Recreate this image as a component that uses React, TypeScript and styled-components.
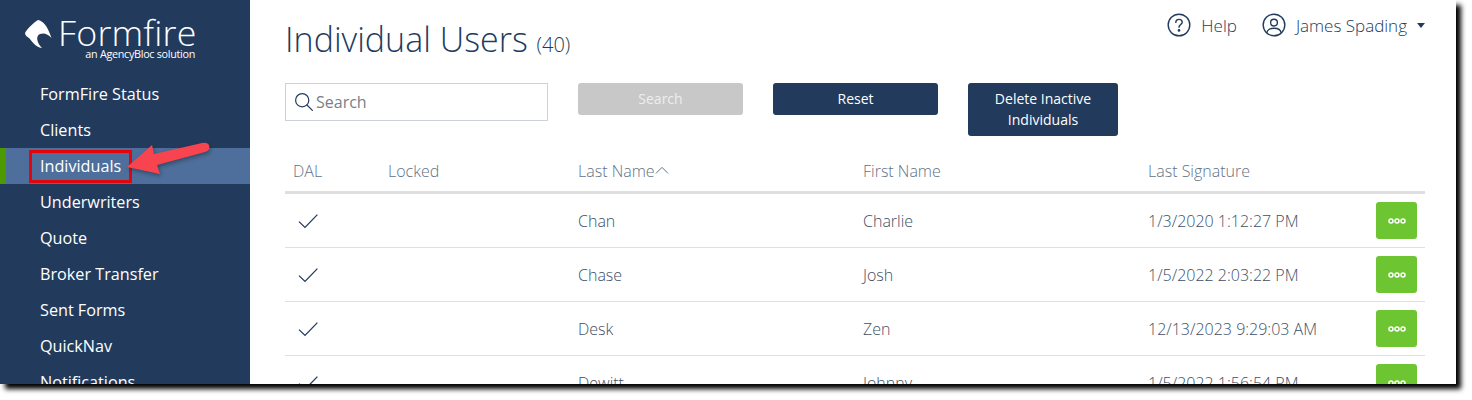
import React from "react";
import styled, { createGlobalStyle } from "styled-components";

const navItems = [
  "FormFire Status",
  "Clients",
  "Individuals",
  "Underwriters",
  "Quote",
  "Broker Transfer",
  "Sent Forms",
  "QuickNav",
  "Notifications",
];

const rows = [
  { last: "Chan", first: "Charlie", signature: "1/3/2020 1:12:27 PM" },
  { last: "Chase", first: "Josh", signature: "1/5/2022 2:03:22 PM" },
  { last: "Desk", first: "Zen", signature: "12/13/2023 9:29:03 AM" },
  { last: "Dewitt", first: "Johnny", signature: "1/5/2022 1:56:54 PM" },
];

const App = () => {
  return (
    <>
      <GlobalStyle />
      <Frame>
        <Sidebar>
          <Logo>
            <LogoTop>
              <svg width="27" height="28" viewBox="0 0 27 28">
                <path
                  d="M0 13 C2 9 8 3 13 0 C18 1 22 5 26.5 18 C23 14 19 12.5 15 14 C11 15.5 11 22 17 28 C10 27 7 21 4 18 C2 17 0 15 0 13 Z"
                  fill="#fff"
                />
              </svg>
              <LogoWord>Formfire</LogoWord>
            </LogoTop>
            <LogoTag>an AgencyBloc solution</LogoTag>
          </Logo>
          <Nav>
            {navItems.map((item) => (
              <NavItem key={item} $active={item === "Individuals"}>
                <NavLabel $boxed={item === "Individuals"}>{item}</NavLabel>
              </NavItem>
            ))}
          </Nav>
          <Arrow width="90" height="40" viewBox="0 0 90 40">
            <path
              d="M3 27 L28 5 L30 14 L78 3 Q85 2 85.5 7 Q85.5 11 81 12 L33 25 L36 34 Z"
              fill="#f8444f"
            />
          </Arrow>
        </Sidebar>
        <Main>
          <TopRow>
            <Title>
              Individual Users <Count>(40)</Count>
            </Title>
            <UserNav>
              <UserLink>
                <svg width="24" height="24" viewBox="0 0 24 24" fill="none" stroke="#223b5d" strokeWidth="1.4">
                  <circle cx="12" cy="12" r="10.8" />
                  <path d="M8.8 9.4 C8.8 7.4 10.3 6.4 12 6.4 C13.8 6.4 15.2 7.5 15.2 9.2 C15.2 11.4 12 11.6 12 14.2" strokeLinecap="round" />
                  <circle cx="12" cy="17.4" r="0.7" fill="#223b5d" />
                </svg>
                <UserText>Help</UserText>
              </UserLink>
              <UserLink>
                <svg width="24" height="24" viewBox="0 0 24 24" fill="none" stroke="#223b5d" strokeWidth="1.4">
                  <circle cx="12" cy="12" r="10.8" />
                  <circle cx="12" cy="9.6" r="3.4" />
                  <path d="M4.8 20 C5.4 16.4 8 15.2 12 15.2 C16 15.2 18.6 16.4 19.2 20" />
                </svg>
                <UserText>James Spading</UserText>
                <Caret />
              </UserLink>
            </UserNav>
          </TopRow>
          <FilterRow>
            <SearchBox>
              <svg width="20" height="20" viewBox="0 0 20 20" fill="none" stroke="#223b5d" strokeWidth="1.2">
                <circle cx="8.2" cy="8.2" r="6.6" />
                <path d="M13 13 L18.4 18.4" strokeLinecap="round" />
              </svg>
              <SearchInput placeholder="Search" />
            </SearchBox>
            <ActionButton $disabled>Search</ActionButton>
            <ActionButton>Reset</ActionButton>
            <DeleteButton>
              Delete Inactive
              <br />
              Individuals
            </DeleteButton>
          </FilterRow>
          <HeaderRow>
            <HeaderCell>DAL</HeaderCell>
            <HeaderCell>Locked</HeaderCell>
            <HeaderCell>
              Last Name
              <svg width="14" height="8" viewBox="0 0 14 8" fill="none" stroke="#5f7286" strokeWidth="1">
                <path d="M1 7.4 L7 1.4 L13 7.4" />
              </svg>
            </HeaderCell>
            <HeaderCell>First Name</HeaderCell>
            <HeaderCell>Last Signature</HeaderCell>
          </HeaderRow>
          {rows.map((row) => (
            <BodyRow key={row.last}>
              <BodyCell>
                <svg width="22" height="16" viewBox="0 0 22 16" fill="none" stroke="#223b5d" strokeWidth="1.3">
                  <path d="M2 8.6 L8 14.4 L20.4 1.6" />
                </svg>
              </BodyCell>
              <BodyCell />
              <BodyCell>{row.last}</BodyCell>
              <BodyCell>{row.first}</BodyCell>
              <BodyCell>{row.signature}</BodyCell>
              <MoreButton>
                <svg width="18" height="6" viewBox="0 0 18 6" fill="none" stroke="#fff" strokeWidth="1.5">
                  <circle cx="3" cy="3" r="2" />
                  <circle cx="9" cy="3" r="2" />
                  <circle cx="15" cy="3" r="2" />
                </svg>
              </MoreButton>
            </BodyRow>
          ))}
        </Main>
      </Frame>
    </>
  );
};

export default App;

const GlobalStyle = createGlobalStyle`
  html, body {
    margin: 0;
    background: #fff;
  }
  body {
    font-family: "Open Sans", "Liberation Sans", sans-serif;
    height: 400px;
    overflow: hidden;
  }
`;

const Frame = styled.div`
  width: 1456px;
  height: 384px;
  display: flex;
  overflow: hidden;
  background: #fff;
  box-shadow: 5px 5px 5px 0 #000;
`;

const Sidebar = styled.aside`
  position: relative;
  width: 250px;
  flex: none;
  background: #223b5d;
  color: #fff;
`;

const Logo = styled.div`
  width: 170px;
  margin-left: 25px;
  padding-top: 16px;
  height: 76px;
  box-sizing: border-box;
  display: flex;
  flex-direction: column;
`;

const LogoTop = styled.div`
  display: flex;
  align-items: center;
  gap: 6px;
  height: 33px;
  svg {
    margin-top: 2px;
    flex: none;
  }
`;

const LogoWord = styled.span`
  font-size: 35.8px;
  font-weight: 300;
  line-height: 33px;
  letter-spacing: 0.2px;
`;

const LogoTag = styled.span`
  align-self: flex-end;
  font-size: 10.8px;
  line-height: 12px;
  margin-top: -1px;
  letter-spacing: -0.3px;
`;

const Nav = styled.nav`
  display: flex;
  flex-direction: column;
`;

const NavItem = styled.div<{ $active?: boolean }>`
  height: 36px;
  box-sizing: border-box;
  padding-left: ${(p) => (p.$active ? "34px" : "40px")};
  display: flex;
  align-items: center;
  font-size: 16.2px;
  background: ${(p) => (p.$active ? "#4e6f9b" : "transparent")};
  border-left: ${(p) => (p.$active ? "6px solid #4c9a00" : "none")};
`;

const NavLabel = styled.span<{ $boxed?: boolean }>`
  position: relative;
  ${(p) =>
    p.$boxed &&
    `
    &::after {
      content: "";
      position: absolute;
      left: -11px;
      right: -11px;
      top: -5px;
      bottom: -6px;
      border: 3px solid #e4050c;
    }
  `}
`;

const Arrow = styled.svg`
  position: absolute;
  left: 124px;
  top: 140px;
  filter: drop-shadow(1px 2px 2px rgba(0, 0, 0, 0.35));
`;

const Main = styled.main`
  flex: 1;
  min-width: 0;
  padding: 0 31px 0 35px;
`;

const TopRow = styled.div`
  display: flex;
  justify-content: space-between;
  height: 83px;
`;

const Title = styled.h1`
  margin: 16px 0 0;
  font-size: 34px;
  font-weight: 300;
  line-height: 46px;
  color: #223b5d;
`;

const Count = styled.span`
  font-size: 20px;
`;

const UserNav = styled.div`
  display: flex;
  align-items: flex-start;
  gap: 25px;
  padding-top: 13px;
`;

const UserLink = styled.div`
  display: flex;
  align-items: center;
  height: 24px;
  gap: 10px;
`;

const UserText = styled.span`
  font-size: 17px;
  font-weight: 300;
  color: #223b5d;
`;

const Caret = styled.span`
  width: 0;
  height: 0;
  border-left: 4.5px solid transparent;
  border-right: 4.5px solid transparent;
  border-top: 5px solid #223b5d;
`;

const FilterRow = styled.div`
  display: flex;
  align-items: flex-start;
  gap: 30px;
  height: 65px;
`;

const SearchBox = styled.label`
  width: 263px;
  height: 38px;
  box-sizing: border-box;
  border: 1px solid #cdd1d8;
  padding-left: 8px;
  display: flex;
  align-items: center;
  gap: 2px;
`;

const SearchInput = styled.input`
  border: none;
  outline: none;
  min-width: 0;
  flex: 1;
  padding: 0;
  font-family: inherit;
  font-size: 16px;
  color: #223b5d;
  &::placeholder {
    color: #7a7f87;
    opacity: 1;
  }
`;

const ActionButton = styled.button<{ $disabled?: boolean }>`
  width: 165px;
  height: 32px;
  border: none;
  border-radius: 3px;
  padding: 0 0 2px;
  font-family: inherit;
  font-size: 14px;
  font-weight: 500;
  color: ${(p) => (p.$disabled ? "#eeeeee" : "#fff")};
  background: ${(p) => (p.$disabled ? "#c8c8c8" : "#223b5d")};
`;

const DeleteButton = styled(ActionButton)`
  width: 150px;
  height: 53px;
  line-height: 21px;
`;

const columns = "103px 190px 285px 285px 1fr";

const HeaderRow = styled.div`
  display: grid;
  grid-template-columns: ${columns};
  height: 46px;
  box-sizing: border-box;
  border-bottom: 3px solid #dfdfdf;
`;

const HeaderCell = styled.div`
  padding-top: 13px;
  font-size: 16px;
  font-weight: 300;
  line-height: 20px;
  color: #5f7286;
  &:first-child {
    padding-left: 8px;
  }
  svg {
    margin-bottom: 3px;
  }
`;

const BodyRow = styled.div`
  position: relative;
  display: grid;
  grid-template-columns: ${columns};
  align-items: center;
  height: 54px;
  box-sizing: border-box;
  border-bottom: 1px solid #dfdfdf;
`;

const BodyCell = styled.div`
  font-size: 16px;
  font-weight: 300;
  color: #3c4f66;
  &:first-child {
    padding-left: 12px;
    display: flex;
  }
`;

const MoreButton = styled.button`
  position: absolute;
  right: 8px;
  top: 8px;
  width: 41px;
  height: 37px;
  border: none;
  border-radius: 3px;
  padding: 0;
  background: #6dc531;
  display: flex;
  align-items: center;
  justify-content: center;
`;
